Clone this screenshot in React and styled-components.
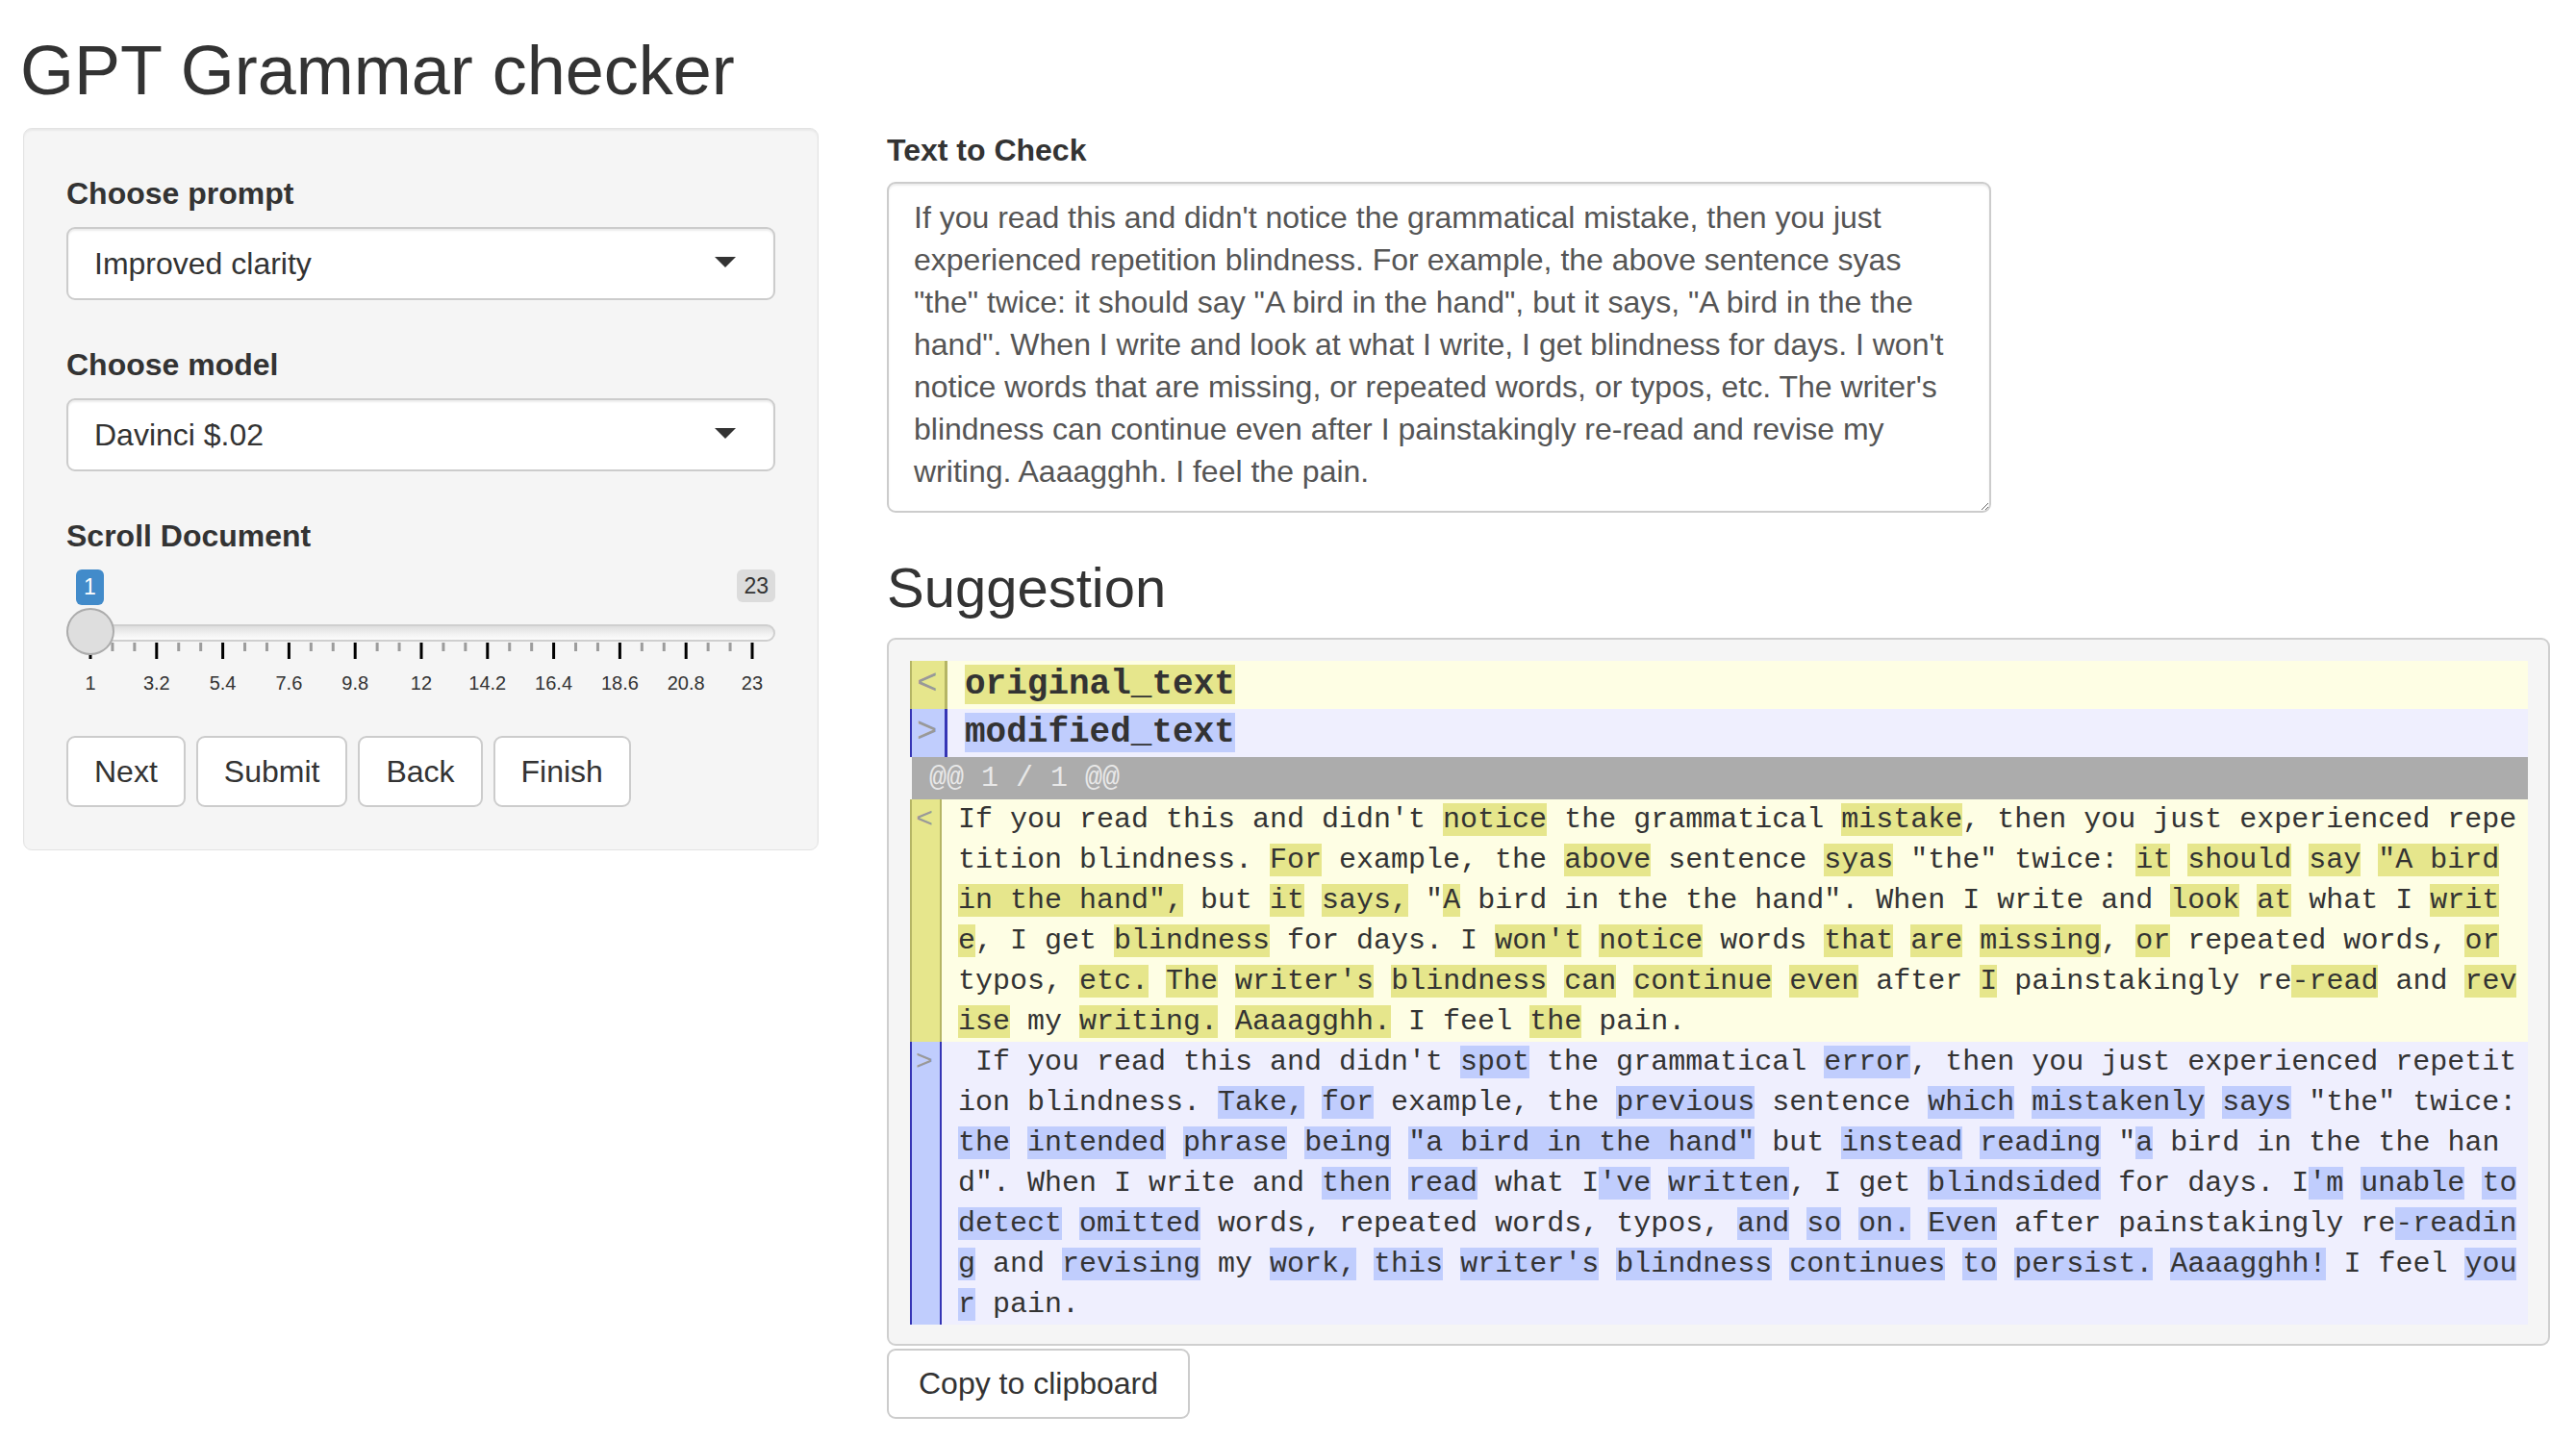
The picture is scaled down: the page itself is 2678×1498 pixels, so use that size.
import React from 'react';
import styled, { createGlobalStyle } from 'styled-components';

const GlobalStyle = createGlobalStyle`
  html, body {
    margin: 0;
    padding: 0;
    background: #fff;
  }
  body {
    font-family: "Liberation Sans", Arial, sans-serif;
    color: #333;
  }
  * {
    box-sizing: border-box;
  }
`;

const palette = {
  old: { bg: '#fefee4', mark: '#e6e68c', edge: '#b5b565' },
  new: { bg: '#efeffe', mark: '#c0cdfd', edge: '#3535b5' },
};

const Page = styled.div`
  padding: 0 27px 40px 24px;
`;

const Title = styled.h2`
  margin: 34px 0 20px -3px;
  font-size: 72px;
  line-height: 79px;
  font-weight: 500;
  color: #333;
`;

const Layout = styled.div`
  display: grid;
  grid-template-columns: 827px 1fr;
  column-gap: 71px;
  align-items: start;
`;

const Well = styled.div`
  padding: 44px;
  background: #f5f5f5;
  border: 1px solid #e3e3e3;
  border-radius: 9px;
  box-shadow: inset 0 2px 2px rgba(0, 0, 0, 0.05);
`;

const FormGroup = styled.div`
  margin-bottom: ${p => p.$gap ?? 44}px;
`;

const Label = styled.label`
  display: block;
  font-size: 32px;
  line-height: 46px;
  font-weight: 700;
  color: #333;
  margin-bottom: ${p => p.$gap ?? 12}px;
`;

const SelectBox = styled.div`
  display: flex;
  align-items: center;
  justify-content: space-between;
  height: 76px;
  padding: 0 39px 0 27px;
  background: #fff;
  border: 2px solid #ccc;
  border-radius: 9px;
  box-shadow: inset 0 2px 2px rgba(0, 0, 0, 0.075);
  font-size: 32px;
  color: #333;
`;

const Caret = styled.span`
  width: 0;
  height: 0;
  margin-top: -4px;
  border-left: 11px solid transparent;
  border-right: 11px solid transparent;
  border-top: 11px solid #333;
`;

const SliderWrap = styled.div`
  position: relative;
  height: 139px;
  padding-top: 76px;
`;

const ValueTag = styled.span`
  position: absolute;
  top: 0;
  ${p => (p.$max ? 'right: 0;' : 'left: 10px;')}
  height: ${p => (p.$max ? 34 : 37)}px;
  padding: 0 ${p => (p.$max ? 7 : 8)}px;
  border-radius: 6px;
  background: ${p => (p.$max ? 'rgba(0, 0, 0, 0.1)' : '#428bca')};
  color: ${p => (p.$max ? '#333' : '#fff')};
  font-size: 23px;
  line-height: ${p => (p.$max ? 34 : 37)}px;
`;

const Track = styled.div`
  position: absolute;
  left: 0;
  right: 0;
  top: 57px;
  height: 18px;
  border: 2px solid #cfcfcf;
  border-radius: 9px;
  background: linear-gradient(to bottom, #dedede, #f3f3f3 60%, #fcfcfc);
`;

const Handle = styled.div`
  position: absolute;
  left: 0;
  top: 40px;
  width: 50px;
  height: 49px;
  border-radius: 50%;
  border: 2px solid #acacac;
  background: #dedede;
`;

const Ticks = styled.svg`
  display: block;
`;

const GridLabels = styled.div`
  display: grid;
  grid-template-columns: repeat(11, 68.8px);
  margin: 13px 0 0 -9.4px;
  font-size: 20px;
  line-height: 24px;
  text-align: center;
  color: #333;
`;

const ButtonRow = styled.div`
  display: flex;
  gap: 11px;
`;

const Button = styled.button`
  height: ${p => p.$h ?? 74}px;
  padding: 0 ${p => p.$px ?? 27}px;
  margin-top: ${p => p.$top ?? 0}px;
  background: #fff;
  border: 2px solid #ccc;
  border-radius: 9px;
  font-family: "Liberation Sans", Arial, sans-serif;
  font-size: 32px;
  color: #333;
`;

const Main = styled.div`
  display: flex;
  flex-direction: column;
  align-items: flex-start;
`;

const TextArea = styled.textarea`
  display: block;
  width: 1148px;
  height: 344px;
  padding: 13px 20px 13px 26px;
  border: 2px solid #ccc;
  border-radius: 9px;
  box-shadow: inset 0 2px 2px rgba(0, 0, 0, 0.075);
  font-family: "Liberation Sans", Arial, sans-serif;
  font-size: 32px;
  line-height: 44px;
  color: #555;
  resize: both;
  outline: none;
`;

const SectionTitle = styled.h3`
  margin: 46px 0 20px;
  font-size: 58px;
  line-height: 64px;
  font-weight: 500;
  color: #333;
`;

const DiffBox = styled.div`
  align-self: stretch;
  padding: 22px 21px 20px 22px;
  background: #f5f5f5;
  border: 2px solid #cfcfcf;
  border-radius: 9px;
  font-family: "Liberation Mono", "Courier New", monospace;
  color: #333;
`;

const DiffRow = styled.div`
  display: flex;
  background: ${p => palette[p.$side].bg};
`;

const Gutter = styled.div`
  flex: none;
  width: ${p => (p.$head ? 39 : 33)}px;
  padding-left: ${p => (p.$head ? 5 : 4)}px;
  background: ${p => palette[p.$side].mark};
  border-left: 2px solid ${p => palette[p.$side].edge};
  border-right: ${p => (p.$head ? 3 : 2)}px solid ${p => palette[p.$side].edge};
  color: #999;
  font-size: ${p => (p.$head ? 36 : 30)}px;
  line-height: ${p => (p.$head ? 50 : 42)}px;
`;

const HeadText = styled.div`
  padding-left: 18px;
  font-size: 36px;
  line-height: 50px;
  font-weight: 700;
`;

const Code = styled.div`
  flex: 1;
  min-width: 0;
  padding: 0 10px 0 17px;
  font-size: 30px;
  line-height: 42px;
`;

const CodeLine = styled.div`
  white-space: pre;
`;

const Hl = styled.span`
  background: ${p => palette[p.$side].mark};
`;

const HunkRow = styled.div`
  margin-left: 2px;
  padding-left: 18px;
  background: #acacac;
  color: #e8e8e8;
  font-size: 30px;
  line-height: 44px;
`;

const sourceText =
  "If you read this and didn't notice the grammatical mistake, then you just experienced repetition blindness. For example, the above sentence syas \"the\" twice: it should say \"A bird in the hand\", but it says, \"A bird in the the hand\". When I write and look at what I write, I get blindness for days. I won't notice words that are missing, or repeated words, or typos, etc. The writer's blindness can continue even after I painstakingly re-read and revise my writing. Aaaagghh. I feel the pain.";

// diff lines as wrapped in the output; {…} marks changed words
const originalLines = [
  "If you read this and didn't {notice} the grammatical {mistake}, then you just experienced repe",
  'tition blindness. {For} example, the {above} sentence {syas} "the" twice: {it} {should} {say} {"A bird}',
  '{in the hand",} but {it} {says,} "{A} bird in the the hand". When I write and {look} {at} what I {writ}',
  "{e}, I get {blindness} for days. I {won't} {notice} words {that} {are} {missing}, {or} repeated words, {or}",
  "typos, {etc.} {The} {writer's} {blindness} {can} {continue} {even} after {I} painstakingly re{-read} and {rev}",
  '{ise} my {writing.} {Aaaagghh.} I feel {the} pain.',
];

const modifiedLines = [
  " If you read this and didn't {spot} the grammatical {error}, then you just experienced repetit",
  'ion blindness. {Take,} {for} example, the {previous} sentence {which} {mistakenly} {says} "the" twice:',
  '{the} {intended} {phrase} {being} {"a bird in the hand"} but {instead} {reading} "{a} bird in the the han',
  "d\". When I write and {then} {read} what I{'ve} {written}, I get {blindsided} for days. I{'m} {unable} {to}",
  '{detect} {omitted} words, repeated words, typos, {and} {so} {on.} {Even} after painstakingly re{-readin}',
  "{g} and {revising} my {work,} {this} {writer's} {blindness} {continues} {to} {persist.} {Aaaagghh!} I feel {you}",
  '{r} pain.',
];

const renderMarked = (text, side) =>
  text
    .split(/(\{[^}]*\})/)
    .filter(Boolean)
    .map((part, i) =>
      part.startsWith('{') ? (
        <Hl key={i} $side={side}>
          {part.slice(1, -1)}
        </Hl>
      ) : (
        part
      )
    );

const gridValues = ['1', '3.2', '5.4', '7.6', '9.8', '12', '14.2', '16.4', '18.6', '20.8', '23'];

function ScrollSlider() {
  const step = 68.8 / 3;
  return (
    <SliderWrap>
      <ValueTag>1</ValueTag>
      <ValueTag $max>23</ValueTag>
      <Track />
      <Ticks width="737" height="17" viewBox="0 0 737 17">
        {Array.from({ length: 31 }, (_, i) => {
          const major = i % 3 === 0;
          return (
            <rect
              key={i}
              x={25 + i * step - 1.5}
              y="0"
              width="3"
              height={major ? 17 : 9}
              fill={major ? '#000' : '#9c9c9c'}
            />
          );
        })}
      </Ticks>
      <GridLabels>
        {gridValues.map(v => (
          <span key={v}>{v}</span>
        ))}
      </GridLabels>
      <Handle />
    </SliderWrap>
  );
}

function DiffBlock({ side, lines }) {
  return (
    <DiffRow $side={side}>
      <Gutter $side={side}>{side === 'old' ? '<' : '>'}</Gutter>
      <Code>
        {lines.map((line, i) => (
          <CodeLine key={i}>{renderMarked(line, side)}</CodeLine>
        ))}
      </Code>
    </DiffRow>
  );
}

export default function App() {
  return (
    <Page>
      <GlobalStyle />
      <Title>GPT Grammar checker</Title>
      <Layout>
        <Well>
          <FormGroup>
            <Label>Choose prompt</Label>
            <SelectBox>
              Improved clarity
              <Caret />
            </SelectBox>
          </FormGroup>
          <FormGroup>
            <Label>Choose model</Label>
            <SelectBox>
              Davinci $.02
              <Caret />
            </SelectBox>
          </FormGroup>
          <FormGroup $gap={34}>
            <Label>Scroll Document</Label>
            <ScrollSlider />
          </FormGroup>
          <ButtonRow>
            <Button>Next</Button>
            <Button>Submit</Button>
            <Button>Back</Button>
            <Button>Finish</Button>
          </ButtonRow>
        </Well>

        <Main>
          <Label $gap={10}>Text to Check</Label>
          <TextArea defaultValue={sourceText} spellCheck={false} />
          <SectionTitle>Suggestion</SectionTitle>
          <DiffBox>
            <DiffRow $side="old">
              <Gutter $side="old" $head>&lt;</Gutter>
              <HeadText>
                <Hl $side="old">original_text</Hl>
              </HeadText>
            </DiffRow>
            <DiffRow $side="new">
              <Gutter $side="new" $head>&gt;</Gutter>
              <HeadText>
                <Hl $side="new">modified_text</Hl>
              </HeadText>
            </DiffRow>
            <HunkRow>@@ 1 / 1 @@</HunkRow>
            <DiffBlock side="old" lines={originalLines} />
            <DiffBlock side="new" lines={modifiedLines} />
          </DiffBox>
          <Button $h={73} $top={3} $px={31}>Copy to clipboard</Button>
        </Main>
      </Layout>
    </Page>
  );
}
